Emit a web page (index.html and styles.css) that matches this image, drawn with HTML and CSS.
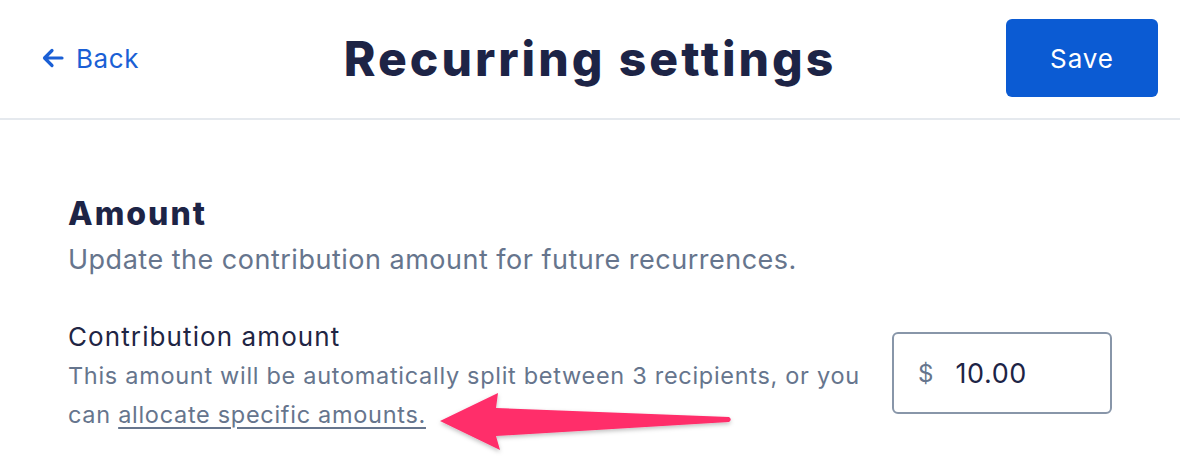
FILE: index.html
```html
<!DOCTYPE html>
<html>
<head>
    <title>Recurring settings</title>
    <meta charset="utf-8">
    <link rel="stylesheet" href="styles.css">
</head>
<body>
<div class="topbar">
	<a class="back" href="#">
		<svg class="back-icon" width="22" height="20" viewBox="0 0 22 20"><path d="M20 10H3M10 2.5L2.5 10L10 17.5" fill="none" stroke="currentColor" stroke-width="3.2" stroke-linecap="round" stroke-linejoin="round"/></svg>
		<span>Back</span>
	</a>
	<h1 class="title">Recurring settings</h1>
	<div class="actions">
		<button class="save">Save</button>
	</div>
</div>

<div class="section">
	<h2 class="section-title">Amount</h2>
	<p class="section-desc">Update the contribution amount for future recurrences.</p>

	<div class="field">
		<div class="field-text">
			<div class="field-label">Contribution amount</div>
			<div class="field-help">This amount will be automatically split between 3 recipients, or you can <a href="#">allocate specific amounts.</a></div>
		</div>
		<div class="money">
			<span class="currency">$</span>
			<span class="value">10.00</span>
		</div>
	</div>
</div>

<!-- annotation arrow drawn over the page -->
<svg class="annotation" width="1180" height="464" viewBox="0 0 1180 464">
	<defs>
		<filter id="shade" x="-10%" y="-30%" width="120%" height="160%">
			<feDropShadow dx="0" dy="2" stdDeviation="2" flood-color="#000" flood-opacity="0.25"/>
		</filter>
	</defs>
	<path filter="url(#shade)" fill="#ff2d6b" d="M440 421 L498 393 L496 408 L729 417 Q732.5 419.5 729 422 L496 436 L500 450 Z"/>
</svg>
</body>
</html>
```

FILE: styles.css
```css
* {
	padding: 0;
	margin: 0;
	box-sizing: border-box;
}

body {
	position: relative;
	width: 1180px;
	height: 464px;
	overflow: hidden;
	background: #fff;
	font-family: "Inter", "Liberation Sans", sans-serif;
	color: #1d2446;
}

.topbar {
	display: grid;
	grid-template-columns: 1fr auto 1fr;
	align-items: center;
	height: 120px;
	padding: 0 22px 2px 22px;
	border-bottom: 2px solid #e5e9ee;
}

.back {
	display: flex;
	align-items: center;
	gap: 12px;
	margin-left: 20px;
	color: #1a5fd5;
	text-decoration: none;
	font-size: 26px;
	letter-spacing: 0.6px;
	justify-self: start;
}

.back-icon {
	display: block;
}

.title {
	font-size: 48px;
	font-weight: 800;
	letter-spacing: 3px;
	color: #1d2446;
	text-align: center;
}

.actions {
	justify-self: end;
}

.save {
	width: 152px;
	height: 78px;
	border: none;
	border-radius: 6px;
	background: #0b5bd3;
	color: #fff;
	font-family: "Inter", "Liberation Sans", sans-serif;
	font-size: 26px;
	letter-spacing: 0.9px;
	cursor: pointer;
}

.section {
	padding: 76px 68px 0 68px;
}

.section-title {
	font-size: 32px;
	font-weight: 800;
	line-height: 36px;
	letter-spacing: 2px;
	color: #1d2446;
}

.section-desc {
	margin-top: 9px;
	font-size: 27px;
	line-height: 38px;
	letter-spacing: 0.5px;
	color: #66758d;
}

.field {
	display: flex;
	justify-content: space-between;
	align-items: flex-start;
	margin-top: 41px;
}

.field-text {
	width: 810px;
}

.field-label {
	font-size: 26px;
	line-height: 34px;
	letter-spacing: 1.1px;
	color: #1f2544;
}

.field-help {
	margin-top: 2px;
	font-size: 23.5px;
	line-height: 39px;
	letter-spacing: 0.7px;
	color: #66758d;
}

.field-help a {
	color: #66758d;
	text-decoration: underline;
	text-decoration-thickness: 2px;
	text-underline-offset: 4px;
}

.money {
	display: flex;
	align-items: center;
	gap: 22px;
	width: 220px;
	height: 82px;
	margin-top: 12px;
	padding: 0 24px;
	border: 2px solid #8896a9;
	border-radius: 6px;
}

.currency {
	font-size: 24px;
	color: #66758d;
}

.value {
	font-size: 27px;
	letter-spacing: 0.6px;
	color: #1d2446;
}

.annotation {
	position: absolute;
	left: 0;
	top: 0;
	pointer-events: none;
}
```
